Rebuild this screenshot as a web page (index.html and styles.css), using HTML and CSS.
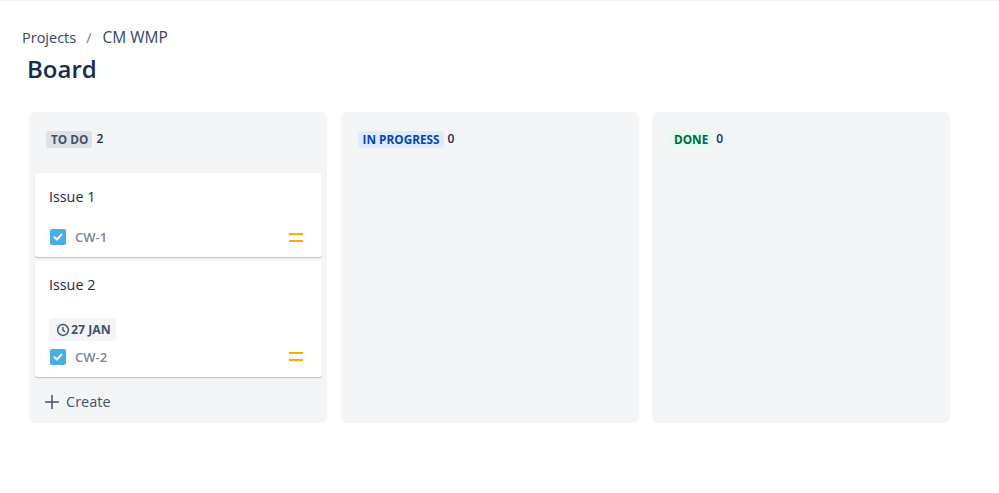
FILE: index.html
```html
<!DOCTYPE html>
<html lang="en">
<head>
  <meta charset="UTF-8">
  <title>Board</title>
  <link rel="stylesheet" href="styles.css">
</head>
<body>
  <div class="page">
    <nav class="breadcrumb">
      <span>Projects</span>
      <span class="slash">/</span>
      <span class="projectName">CM WMP</span>
    </nav>
    <h1>Board</h1>

    <div class="board">
      <!-- To do -->
      <section class="column">
        <div class="columnHead">
          <span class="lozenge todo">TO DO</span>
          <span class="count">2</span>
        </div>
        <div class="cards">
          <article class="card">
            <div class="cardTitle">Issue 1</div>
            <div class="cardFoot">
              <svg class="taskIcon" viewBox="0 0 16 16"><rect width="16" height="16" rx="2" fill="#4bade8"/><path d="M4.5 8.2l2.4 2.4 4.4-5" fill="none" stroke="#fff" stroke-width="2" stroke-linecap="round" stroke-linejoin="round"/></svg>
              <span class="issueKey">CW-1</span>
              <span class="priority"></span>
            </div>
          </article>
          <article class="card">
            <div class="cardTitle">Issue 2</div>
            <div class="dueDate">
              <svg class="clock" viewBox="0 0 14 14"><circle cx="7" cy="7" r="5.4" fill="none" stroke="#42526e" stroke-width="1.5"/><path d="M7 3.9V7.3l2.2 1.5" fill="none" stroke="#42526e" stroke-width="1.4"/></svg>
              <span>27 JAN</span>
            </div>
            <div class="cardFoot dated">
              <svg class="taskIcon" viewBox="0 0 16 16"><rect width="16" height="16" rx="2" fill="#4bade8"/><path d="M4.5 8.2l2.4 2.4 4.4-5" fill="none" stroke="#fff" stroke-width="2" stroke-linecap="round" stroke-linejoin="round"/></svg>
              <span class="issueKey">CW-2</span>
              <span class="priority"></span>
            </div>
          </article>
        </div>
        <div class="create">
          <svg class="plus" viewBox="0 0 14 14"><path d="M7 0v14M0 7h14" stroke="#42526e" stroke-width="1.5"/></svg>
          <span>Create</span>
        </div>
      </section>

      <!-- In progress -->
      <section class="column">
        <div class="columnHead">
          <span class="lozenge progress">IN PROGRESS</span>
          <span class="count">0</span>
        </div>
      </section>

      <!-- Done -->
      <section class="column">
        <div class="columnHead">
          <span class="lozenge done">DONE</span>
          <span class="count">0</span>
        </div>
      </section>
    </div>
  </div>
</body>
</html>
```

FILE: styles.css
```css
body {
  font-family: "Open Sans", "Noto Sans", Arial, sans-serif;
  background-color: #ffffff;
  color: #172b4d;
  margin: 0;
  padding: 0;
}
.page {
  border-top: 1px solid #f1f2f4;
  padding: 27px 0 0 22px;
}
.breadcrumb {
  display: flex;
  align-items: center;
  gap: 10px;
  height: 18px;
  font-size: 14.5px;
  color: #344563;
}
.slash {
  color: #6b778c;
}
.projectName {
  font-size: 15.5px;
  margin-left: 1px;
}
h1 {
  margin: 5px 0 0 5px;
  font-size: 24px;
  line-height: 36px;
  font-weight: 600;
  color: #172b4d;
}
.board {
  display: flex;
  gap: 13.5px;
  margin: 25px 0 0 7px;
}
.column {
  width: 298px;
  height: 311px;
  background-color: #f4f5f7;
  border-radius: 6px;
  display: flex;
  flex-direction: column;
}
.columnHead {
  display: flex;
  align-items: center;
  gap: 4px;
  height: 18px;
  margin: 18px 0 0 17px;
}
.lozenge {
  font-size: 11.8px;
  font-weight: 700;
  line-height: 17px;
  padding: 0 4px 0 5px;
  border-radius: 3px;
}
.lozenge.todo {
  background-color: #dfe1e6;
  color: #42526e;
}
.lozenge.progress {
  background-color: #deebff;
  color: #0747a6;
}
.lozenge.done {
  background-color: #e3fcef;
  color: #006644;
}
.count {
  font-size: 12px;
  font-weight: 600;
  color: #172b4d;
  margin-top: -2px;
}
.cards {
  display: flex;
  flex-direction: column;
  gap: 4px;
  margin: 25px 5px 0 6px;
}
.card {
  background-color: #ffffff;
  border-radius: 3px;
  box-shadow: 0 1px 1px rgba(9, 30, 66, 0.25);
  padding: 14px 14px 11px;
}
.cardTitle {
  font-size: 14.3px;
  line-height: 20px;
  color: #172b4d;
}
.cardFoot {
  display: flex;
  align-items: center;
  height: 18px;
  margin-top: 21px;
}
.cardFoot.dated {
  margin-top: 6px;
}
.taskIcon {
  width: 16px;
  height: 16px;
  margin-left: 0.5px;
}
.issueKey {
  margin-left: 9.5px;
  font-size: 13px;
  font-weight: 600;
  color: #7a869a;
}
.priority {
  margin-left: auto;
  margin-right: 5px;
  width: 14px;
  height: 5px;
  border-top: 2px solid #ffab00;
  border-bottom: 2px solid #ffab00;
}
.dueDate {
  display: inline-flex;
  align-items: center;
  gap: 1px;
  height: 23px;
  margin-top: 23px;
  padding: 0 5px 0 7px;
  background-color: #f4f5f7;
  border-radius: 3px;
  font-size: 12.3px;
  font-weight: 700;
  color: #42526e;
}
.clock {
  width: 14px;
  height: 14px;
}
.create {
  display: flex;
  align-items: center;
  gap: 7px;
  margin: 15px 0 0 16px;
  height: 20px;
  font-size: 14.5px;
  font-weight: 500;
  color: #42526e;
}
.plus {
  width: 14px;
  height: 14px;
}
```
